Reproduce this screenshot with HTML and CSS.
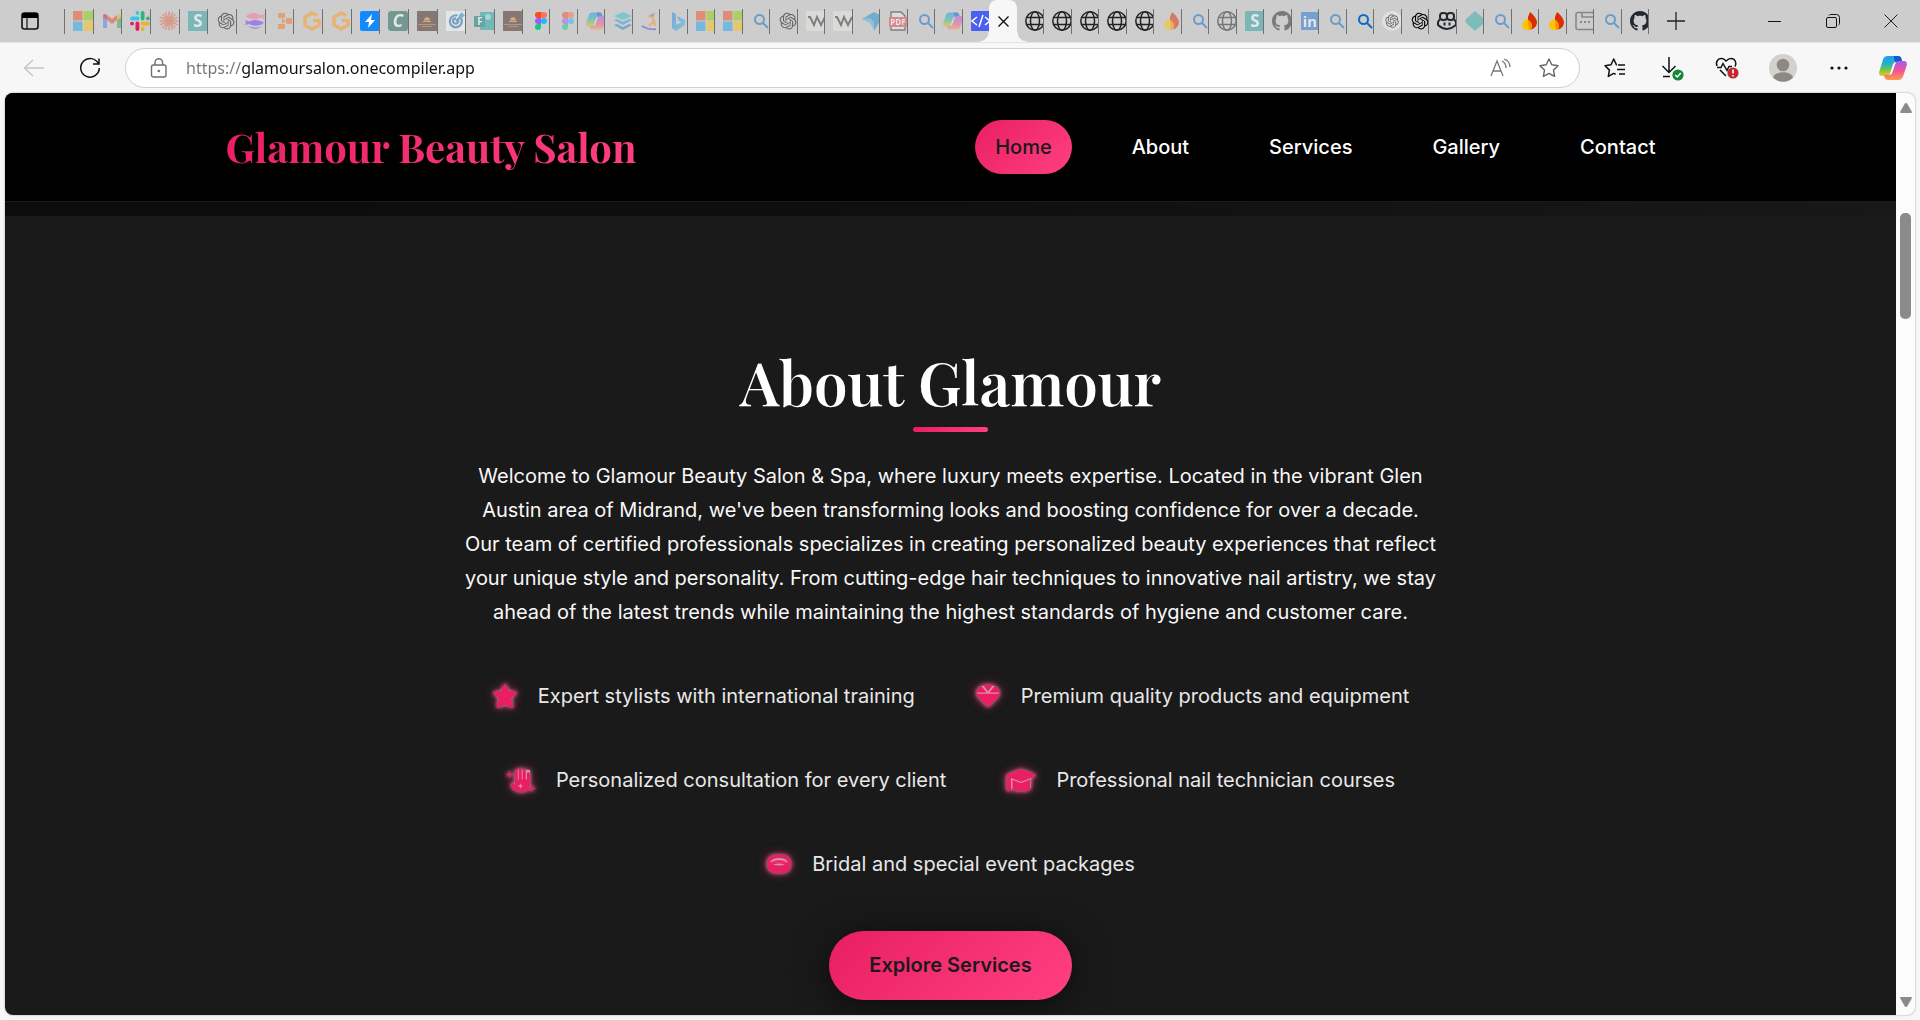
FILE: index.html
```html
<!DOCTYPE html>
<html lang="en">
<head>
<meta charset="utf-8">
<meta name="viewport" content="width=device-width, initial-scale=1">
<title>Glamour Beauty Salon</title>
<link rel="stylesheet" href="styles.css">
</head>
<body>
<svg class="gradients" aria-hidden="true">
  <defs>
    <linearGradient id="cpA" x1="0" y1="0" x2="0" y2="1"><stop offset="0" stop-color="#1b9df0"/><stop offset=".4" stop-color="#22b3c8"/><stop offset=".7" stop-color="#7cc44a"/><stop offset="1" stop-color="#f5c518"/></linearGradient>
    <linearGradient id="cpB" x1="0" y1="0" x2="0" y2="1"><stop offset="0" stop-color="#a45cf0"/><stop offset=".5" stop-color="#f0529a"/><stop offset="1" stop-color="#ff9a4a"/></linearGradient>
    <linearGradient id="bg" x1="0" y1="0" x2="1" y2="1"><stop offset="0" stop-color="#2f7bea"/><stop offset="1" stop-color="#2fc4ea"/></linearGradient>
  </defs>
</svg>
<svg class="sprite" aria-hidden="true">
  <symbol id="ms" viewBox="0 0 20 20"><path fill="#f25022" d="M0 0h9.500v9.500H0z"/><path fill="#8fce00" d="M10.500 0H20v9.500h-9.500z"/><path fill="#22a6f0" d="M0 10.500h9.500V20H0z"/><path fill="#ffc40a" d="M10.500 10.500H20V20h-9.500z"/></symbol>
  <symbol id="gmail" viewBox="0 0 20 20"><path fill="#4285f4" d="M1 5l4 3v9H2a1 1 0 0 1-1-1z"/><path fill="#34a853" d="M15 8l4-3v11a1 1 0 0 1-1 1h-3z"/><path fill="#ea4335" d="M5 4l5 4 5-4v5l-5 4-5-4z"/><path fill="#c5221f" d="M1 5c0-2 2-3 4-1v5L1 6z"/><path fill="#fbbc04" d="M19 5c0-2-2-3-4-1v5l4-3z"/></symbol>
  <symbol id="slack" viewBox="0 0 20 20"><g stroke-width="3.800" stroke-linecap="round"><path stroke="#36c5f0" d="M2 7.400h5.500M7.400 2v.1"/><path stroke="#2eb67d" d="M12.600 2v5.500M18 7.400h-.1"/><path stroke="#ecb22e" d="M18 12.600h-5.500M12.600 18v-.1"/><path stroke="#e01e5a" d="M7.400 18v-5.500M2 12.600h.1"/></g></symbol>
  <symbol id="burst" viewBox="0 0 20 20"><path stroke="#e5694a" stroke-width="1.500" stroke-linecap="round" d="M10 1v18M1 10h18M4 3.500l12 13M16 3.500l-12 13M6.500 1.800l7 16.400M13.500 1.800l-7 16.400M1.800 6.500l16.400 7M1.800 13.500l16.400-7"/></symbol>
  <symbol id="sq-s" viewBox="0 0 20 20"><path fill="#27a5a1" d="M0 0h20v20H0z"/><text x="10" y="16" font-size="17" font-weight="700" text-anchor="middle" fill="#fff">S</text></symbol>
  <symbol id="ai" viewBox="0 0 24 24"><path d="M22.282 9.821a5.985 5.985 0 0 0-.516-4.910 6.046 6.046 0 0 0-6.510-2.900A6.065 6.065 0 0 0 4.981 4.182a5.985 5.985 0 0 0-3.998 2.900 6.046 6.046 0 0 0 .743 7.097 5.980 5.980 0 0 0 .511 4.911 6.051 6.051 0 0 0 6.515 2.900A5.985 5.985 0 0 0 13.260 24a6.056 6.056 0 0 0 5.772-4.206 5.989 5.989 0 0 0 3.998-2.900 6.056 6.056 0 0 0-.748-7.073zm-9.022 12.608a4.476 4.476 0 0 1-2.876-1.041l.142-.080 4.778-2.758a.795.795 0 0 0 .393-.681v-6.737l2.020 1.169a.071.071 0 0 1 .038.052v5.583a4.504 4.504 0 0 1-4.495 4.494zm-9.661-4.125a4.471 4.471 0 0 1-.535-3.014l.142.085 4.783 2.758a.771.771 0 0 0 .781 0l5.843-3.369v2.332a.080.080 0 0 1-.033.062L9.740 19.950a4.499 4.499 0 0 1-6.141-1.646zM2.341 7.896a4.485 4.485 0 0 1 2.366-1.973V11.600a.766.766 0 0 0 .388.677l5.814 3.354-2.020 1.169a.076.076 0 0 1-.071 0l-4.830-2.787A4.504 4.504 0 0 1 2.341 7.872zm16.596 3.856L13.104 8.364 15.119 7.200a.076.076 0 0 1 .071 0l4.830 2.791a4.494 4.494 0 0 1-.677 8.104v-5.677a.790.790 0 0 0-.407-.667zm2.011-3.023l-.142-.085-4.774-2.782a.776.776 0 0 0-.785 0L9.409 9.230V6.897a.066.066 0 0 1 .028-.062l4.830-2.787a4.499 4.499 0 0 1 6.680 4.660zM8.307 12.863l-2.020-1.164a.080.080 0 0 1-.038-.057V6.074a4.499 4.499 0 0 1 7.376-3.454l-.142.081L8.704 5.459a.795.795 0 0 0-.393.681zm1.098-2.365l2.602-1.500 2.607 1.500v2.999l-2.597 1.500-2.607-1.500Z" transform="translate(2 2) scale(.84)"/></symbol>
  <symbol id="ai-disc" viewBox="0 0 20 20"><circle cx="10" cy="10" r="10" fill="#f4f4f4"/><use href="#ai" x="2" y="2" width="16" height="16"/></symbol>
  <symbol id="fishes" viewBox="0 0 20 20"><path fill="#ff6fa0" d="M1 5.500c3-4 10-5 15-1l4-2-1 3 1 3-4-2c-4 2.500-11 2.500-15-1z"/><path fill="#6a3cff" d="M0 9l4 1.500c4-2.500 10-2 15 1-4 4-11 4-15 1.500L0 14l1-2.500z"/><path fill="#4a3bff" d="M3 15c5 2 10 2 14 0-3 3-10 4-14 0z"/></symbol>
  <symbol id="blocks" viewBox="0 0 20 20"><path fill="#f4782c" d="M4 2h7v5H4zM12 7h6v6h-6zM4 13h7v5H4zM8 7l4 3-4 3z"/></symbol>
  <symbol id="gee" viewBox="0 0 20 20"><path fill="none" stroke="#ff9a1f" stroke-width="3.600" stroke-linejoin="round" d="M15 4.500l-5-2.500-7 4v8l7 4 7-4v-4.500h-6"/></symbol>
  <symbol id="bolt" viewBox="0 0 20 20"><rect width="20" height="20" rx="2" fill="#1389fd"/><path fill="#fff" d="M12 3l-7 8h4l-1 6 7-8h-4z"/></symbol>
  <symbol id="cee" viewBox="0 0 20 20"><rect width="20" height="20" rx="3" fill="#1c6558"/><text x="10" y="16" font-size="17" font-weight="700" font-style="italic" text-anchor="middle" fill="#fff">C</text></symbol>
  <symbol id="crown" viewBox="0 0 20 20"><path fill="#40231c" d="M0 0h20v20H0z"/><path fill="#e08a3a" d="M7 9.500l.8-2.500L10 6l2.200 1 .8 2.500zM6 10h8v1H6z"/><path fill="#a8602c" d="M1 13h18v1H1zM5 15h10v1H5z"/></symbol>
  <symbol id="target" viewBox="0 0 20 20"><path fill="#fff" d="M0 0h20v20H0z"/><g fill="none" stroke="#1f78b8" stroke-width="2.200"><path d="M14.500 6.500a6 6 0 1 1-3-2M12 9a2.600 2.600 0 1 1-2-1.500M10 10l6-6"/></g><path fill="#1f9ad8" d="M13 4l3-3 1 2 2 1-3 3h-3z"/></symbol>
  <symbol id="forms" viewBox="0 0 20 20"><path fill="#1ba5a0" d="M6 1h14v18H6z"/><circle cx="14" cy="6" r="3" fill="#7fe0dc"/><path fill="#067a78" d="M0 5h11v11H0z"/><text x="6" y="14" font-size="10" font-weight="700" text-anchor="middle" fill="#fff">F</text></symbol>
  <symbol id="figma" viewBox="0 0 20 20"><path fill="#f24e1e" d="M10 1H7a3 3 0 0 0 0 6h3z"/><path fill="#ff7262" d="M10 1h3a3 3 0 0 1 0 6h-3z"/><path fill="#a259ff" d="M10 7H7a3 3 0 0 0 0 6h3z"/><circle cx="13" cy="10" r="3" fill="#1abcfe"/><path fill="#0acf83" d="M10 13H7a3 3 0 1 0 3 3z"/></symbol>
  <symbol id="copilot" viewBox="0 0 28 26"><path fill="url(#cpA)" d="M9 1h10c2 0 3 1 3.500 3l.8 3h-6c-2 0-3 1-3.600 3l-2.500 8c-.6 2-1.700 3-3.500 3H3C.5 21-.3 19 .3 16.500L4 4.500C4.800 2 6.500 1 9 1z"/><path fill="#1559c9" d="M15 1h4c2 0 3 1 3.500 3l.8 3h-6c-1.300 0-1.700-1-2-2z"/><path fill="url(#cpB)" d="M19 25H9c-2 0-3-1-3.500-3l-.5-2h5c2 0 3-1 3.600-3l2.600-8c.6-2 1.700-3 3.500-3H25c2.500 0 3.300 2 2.700 4.500l-3.700 11c-.8 2.500-2.500 3.500-5 3.500z"/><path fill="#f7f7f7" d="M17 8.500q-1.500.5-2 2l-2.500 7q-.5 1.500-2 1.500 1-.5 1.500-2l2.500-7q.7-1.700 2.500-1.500z"/></symbol>
  <symbol id="stack" viewBox="0 0 20 20"><path fill="#2fc2cc" d="M10 1l9 4-9 4-9-4z"/><path fill="#22a5d8" d="M1 9l3-1 6 3 6-3 3 1-9 5z"/><path fill="#1a86d0" d="M1 14l3-1 6 3 6-3 3 1-9 5z"/></symbol>
  <symbol id="sail" viewBox="0 0 20 20"><path fill="none" stroke="#ff8c2a" stroke-width="2" d="M14 2l-3 4 2 4-5 5M12 6l-5-1M13 9l1 6"/><path fill="none" stroke="#6a4cdc" stroke-width="2" d="M1 15q6 4 14 3"/><circle cx="11" cy="4" r="1.500" fill="#5a6cff"/></symbol>
  <symbol id="bing" viewBox="0 0 20 20"><path fill="url(#bg)" d="M4 1l4 2v11l6-3-3-1-2-5 8 4v5l-9 6-4-3z"/></symbol>
  <symbol id="search" viewBox="0 0 20 20"><g fill="none" stroke="#0b6cc4" stroke-width="2"><circle cx="8.500" cy="8.500" r="4.500"/><path d="M12 12l5 5"/></g></symbol>
  <symbol id="dub" viewBox="0 0 20 20"><path fill="#ece8e0" d="M0 0h20v20H0z"/><path fill="none" stroke="#333" stroke-width="2" d="M2 6h2l4 8 3-8 4 8 4-8"/></symbol>
  <symbol id="bird" viewBox="0 0 20 20"><path fill="#1a8fd0" d="M1 8l12-7 6 3v6l-6 10V11z"/><path fill="#56b4e8" d="M1 8l8-1 4 4v8l-4-7z"/></symbol>
  <symbol id="pdf" viewBox="0 0 20 20"><path fill="#eee" stroke="#333" stroke-width="1.400" d="M3 1h10l4 4v14H3z"/><path fill="#e5454f" d="M1 6h18v10H1z"/><text x="10" y="14" font-size="8" font-weight="700" text-anchor="middle" fill="#fff">PDF</text></symbol>
  <symbol id="code" viewBox="0 0 20 20"><rect width="20" height="20" rx="1" fill="#4b5ff0"/><path fill="none" stroke="#fff" stroke-width="1.500" d="M6 6l-5 4 5 4M14 6l5 4-5 4M12 4L8 16"/></symbol>
  <symbol id="globe" viewBox="0 0 20 20"><g fill="none" stroke="#222" stroke-width="1.500"><circle cx="10" cy="10" r="9.200"/><ellipse cx="10" cy="10" rx="4.500" ry="9.200"/><path d="M2 6.500h16M2 13.500h16"/></g></symbol>
  <symbol id="flame" viewBox="0 0 20 20"><path fill="#dd2c00" d="M10 1c5 4 7 8 7 11a7 7 0 0 1-9 6V6z"/><path fill="#ffc400" d="M7 8c3 2 5 4 5 7 0 2-1 4-4 4-4 0-6-2-6-5 0-2 2-5 5-6z"/><path fill="#ff9100" d="M8 9c3 2 4 4 4 6s-1 4-3 4z"/></symbol>
  <symbol id="github" viewBox="0 0 16 16"><path fill="#24292f" d="M8 0C3.580 0 0 3.580 0 8c0 3.540 2.290 6.530 5.470 7.590.4.070.550-.170.550-.380 0-.190-.010-.820-.010-1.490-2.010.370-2.530-.490-2.690-.940-.090-.230-.480-.940-.820-1.130-.280-.150-.680-.520-.010-.530.630-.010 1.080.580 1.230.820.720 1.210 1.870.870 2.330.660.070-.520.280-.870.510-1.070-1.780-.2-3.640-.890-3.640-3.950 0-.870.310-1.590.820-2.150-.080-.2-.360-1.020.080-2.120 0 0 .670-.210 2.200.820.640-.180 1.320-.270 2-.270s1.360.090 2 .270c1.530-1.040 2.200-.820 2.200-.820.440 1.100.160 1.920.080 2.120.510.560.820 1.270.820 2.150 0 3.070-1.870 3.750-3.650 3.950.290.250.540.730.540 1.480 0 1.070-.010 1.930-.010 2.200 0 .210.150.460.550.380A8.010 8.010 0 0 0 16 8c0-4.420-3.580-8-8-8z"/></symbol>
  <symbol id="linkedin" viewBox="0 0 20 20"><rect x="1" y="1" width="18" height="18" rx="1" fill="#2374d8"/><text x="10" y="16" font-size="15" font-weight="700" text-anchor="middle" fill="#fff">in</text></symbol>
  <symbol id="ghc" viewBox="0 0 20 20"><g fill="none" stroke="#24292f" stroke-width="2"><rect x="3" y="2" width="7" height="7" rx="3"/><rect x="10" y="2" width="7" height="7" rx="3"/><path d="M3 8l-2 3v3q9 8 18 0v-3l-2-3"/><path d="M7.500 11.500v3M12.500 11.500v3"/></g></symbol>
  <symbol id="rhomb" viewBox="0 0 20 20"><path fill="#2fada6" d="M10 0l9 8q1 2 0 4l-9 8-9-8q-1-2 0-4z"/></symbol>
  <symbol id="panel" viewBox="0 0 20 20"><g fill="none" stroke="#444" stroke-width="1.600"><rect x="1" y="1.500" width="18" height="17" rx="2"/><path d="M7 2v4h12"/></g><path fill="#444" d="M5 10h2v2H5zM9 10h2v2H9zM13 10h2v2h-2z"/></symbol>
</svg>

<header class="browser">
  <div class="tabstrip">
    <button class="tab-menu" aria-label="Tab actions"><svg width="18" height="18" viewBox="0 0 18 18"><rect x="1" y="1" width="16" height="16" rx="2.500" fill="none" stroke="#111" stroke-width="1.600"/><path d="M1 3a2 2 0 0 1 2-2h12a2 2 0 0 1 2 2v3H1z"/><path d="M6 6v11" stroke="#111" stroke-width="1.200"/></svg></button>
    <nav class="tabs tabs-first" aria-label="Tabs">
      <button class="tab idle"><svg><use href="#ms"/></svg></button>
      <button class="tab idle"><svg><use href="#gmail"/></svg></button>
      <button class="tab"><svg><use href="#slack"/></svg></button>
      <button class="tab idle"><svg><use href="#burst"/></svg></button>
      <button class="tab idle"><svg><use href="#sq-s"/></svg></button>
      <button class="tab idle"><svg><use href="#ai"/></svg></button>
      <button class="tab idle"><svg><use href="#fishes"/></svg></button>
      <button class="tab idle"><svg><use href="#blocks"/></svg></button>
      <button class="tab idle"><svg><use href="#gee"/></svg></button>
      <button class="tab idle"><svg><use href="#gee"/></svg></button>
      <button class="tab"><svg><use href="#bolt"/></svg></button>
      <button class="tab idle"><svg><use href="#cee"/></svg></button>
      <button class="tab idle"><svg><use href="#crown"/></svg></button>
      <button class="tab idle"><svg><use href="#target"/></svg></button>
      <button class="tab idle"><svg><use href="#forms"/></svg></button>
    </nav>
    <nav class="tabs tabs-second" aria-label="More tabs">
      <button class="tab idle"><svg><use href="#crown"/></svg></button>
      <button class="tab"><svg><use href="#figma"/></svg></button>
      <button class="tab idle"><svg><use href="#figma"/></svg></button>
      <button class="tab idle"><svg><use href="#copilot"/></svg></button>
      <button class="tab idle"><svg><use href="#stack"/></svg></button>
      <button class="tab idle"><svg><use href="#sail"/></svg></button>
      <button class="tab idle"><svg><use href="#bing"/></svg></button>
      <button class="tab idle"><svg><use href="#ms"/></svg></button>
      <button class="tab idle"><svg><use href="#ms"/></svg></button>
      <button class="tab idle"><svg><use href="#search"/></svg></button>
      <button class="tab idle"><svg><use href="#ai"/></svg></button>
      <button class="tab idle"><svg><use href="#dub"/></svg></button>
      <button class="tab idle"><svg><use href="#dub"/></svg></button>
      <button class="tab idle"><svg><use href="#bird"/></svg></button>
      <button class="tab idle"><svg><use href="#pdf"/></svg></button>
      <button class="tab idle"><svg><use href="#search"/></svg></button>
      <button class="tab idle"><svg><use href="#copilot"/></svg></button>
      <button class="tab bare"><svg><use href="#code"/></svg></button>
    </nav>
    <button class="tab-active" aria-label="Close tab"><svg width="11" height="11" viewBox="0 0 11 11"><path d="M.5.5l10 10M10.500.5l-10 10" stroke="#111" stroke-width="1.400"/></svg></button>
    <nav class="tabs tabs-third" aria-label="Other tabs">
      <button class="tab"><svg><use href="#globe"/></svg></button>
      <button class="tab"><svg><use href="#globe"/></svg></button>
      <button class="tab"><svg><use href="#globe"/></svg></button>
      <button class="tab"><svg><use href="#globe"/></svg></button>
      <button class="tab"><svg><use href="#globe"/></svg></button>
      <button class="tab idle"><svg><use href="#flame"/></svg></button>
      <button class="tab idle"><svg><use href="#search"/></svg></button>
      <button class="tab idle"><svg><use href="#globe"/></svg></button>
      <button class="tab idle"><svg><use href="#sq-s"/></svg></button>
      <button class="tab idle"><svg><use href="#github"/></svg></button>
      <button class="tab idle"><svg><use href="#linkedin"/></svg></button>
      <button class="tab idle"><svg><use href="#search"/></svg></button>
      <button class="tab"><svg><use href="#search"/></svg></button>
      <button class="tab idle"><svg><use href="#ai-disc"/></svg></button>
      <button class="tab"><svg><use href="#ai"/></svg></button>
      <button class="tab"><svg><use href="#ghc"/></svg></button>
      <button class="tab idle"><svg><use href="#rhomb"/></svg></button>
      <button class="tab idle"><svg><use href="#search"/></svg></button>
      <button class="tab"><svg><use href="#flame"/></svg></button>
      <button class="tab"><svg><use href="#flame"/></svg></button>
      <button class="tab idle"><svg><use href="#panel"/></svg></button>
      <button class="tab idle"><svg><use href="#search"/></svg></button>
      <button class="tab"><svg><use href="#github"/></svg></button>
    </nav>
    <button class="new-tab" aria-label="New tab"><svg width="18" height="18" viewBox="0 0 18 18"><path d="M9 0v18M0 9h18" stroke="#222" stroke-width="1.300"/></svg></button>
    <div class="window-controls">
      <button aria-label="Minimize"><svg width="14" height="14" viewBox="0 0 14 14"><path d="M0 7.500h13" stroke="#111"/></svg></button>
      <button aria-label="Restore"><svg width="14" height="14" viewBox="0 0 14 14"><g fill="none" stroke="#111"><rect x=".5" y="3.500" width="10" height="10" rx="1.500"/><path d="M3 1.500q.5-1 1.500-1h6q3 0 3 3v6q0 1-1 1.500"/></g></svg></button>
      <button aria-label="Close"><svg width="14" height="14" viewBox="0 0 14 14"><path d="M.5.5l13 13M13.500.5l-13 13" stroke="#222"/></svg></button>
    </div>
  </div>

  <div class="toolbar">
    <button class="tool" aria-label="Back"><svg width="22" height="20" viewBox="0 0 22 20"><path d="M21 10H2M10 2l-8.500 8 8.500 8" fill="none" stroke="#c6c6c6" stroke-width="1.400"/></svg></button>
    <button class="tool" aria-label="Refresh"><svg width="22" height="22" viewBox="0 0 22 22"><path d="M19.500 7A9.300 9.300 0 1 0 20.300 11M20 1.500V7h-6" fill="none" stroke="#111" stroke-width="1.500"/></svg></button>
    <div class="address">
      <svg width="18" height="20" viewBox="0 0 18 20"><g fill="none" stroke="#707070" stroke-width="1.400"><rect x="1.500" y="7" width="14.500" height="12" rx="2"/><path d="M5 7V4.500a3.800 3.800 0 0 1 7.600 0V7"/></g><circle cx="8.800" cy="13" r="1.300" fill="#707070"/></svg>
      <input class="url" type="text" aria-label="Address" value="https://glamoursalon.onecompiler.app">
      <button class="tool" aria-label="Read aloud"><svg width="22" height="20" viewBox="0 0 22 20"><path d="M1 18L7 3l6 15M3 13h8M12 3q4 2 4 7M14 1q6 2 6 8" fill="none" stroke="#777" stroke-width="1.300"/></svg></button>
      <button class="tool" aria-label="Favorite"><svg width="22" height="22" viewBox="0 0 22 22"><path d="M11 2l2.800 5.800 6.300.9-4.600 4.400 1.100 6.300-5.600-3-5.600 3 1.100-6.300L1.900 8.700l6.300-.9z" fill="none" stroke="#666" stroke-width="1.400" stroke-linejoin="round"/></svg></button>
    </div>
    <button class="tool" aria-label="Favorites"><svg width="22" height="22" viewBox="0 0 22 22"><path d="M13 7.800h-.5L9.700 2 7 7.800l-6 .9 4.400 4.400-1.100 6.300 5.400-3 2 .8M14 8h7M13 12.500h8M15 17h6" fill="none" stroke="#111" stroke-width="1.500" stroke-linejoin="round"/></svg></button>
    <button class="tool" aria-label="Downloads"><svg width="28" height="26" viewBox="0 0 28 26"><path d="M12 2v15M5.500 11l6.500 6.500 6.500-6.500M6 21.500h7" fill="none" stroke="#111" stroke-width="1.500"/><circle cx="21" cy="20" r="5.600" fill="#16863a"/><path d="M18.300 20l2 2 3.500-4" fill="none" stroke="#fff" stroke-width="1.500"/></svg></button>
    <button class="tool" aria-label="Browser essentials"><svg width="28" height="26" viewBox="0 0 28 26"><path d="M4 11C2 6 6 3 9 3.500c2 .3 3 1.500 4 2.500 1-1 3-2.500 5-2.500 4 0 6 4 4 8M4 12.500h4l2-4 4 7 2-4h3M7 15l6 6" fill="none" stroke="#111" stroke-width="1.500"/><circle cx="20" cy="18" r="5.600" fill="#c4262e"/><path d="M20 14.500v4M20 20v1.500" stroke="#fff" stroke-width="1.600"/></svg></button>
    <button class="tool" aria-label="Profile"><svg width="28" height="28" viewBox="0 0 28 28"><circle cx="14" cy="14" r="14" fill="#d4d1cd"/><circle cx="14" cy="11" r="6.300" fill="#8c8884"/><path d="M4 23.500c2-7 18-7 20 0a14 14 0 0 1-20 0z" fill="#8c8884"/></svg></button>
    <button class="tool" aria-label="Settings and more"><svg width="18" height="4" viewBox="0 0 18 4"><g fill="#111"><circle cx="2" cy="2" r="1.600"/><circle cx="9" cy="2" r="1.600"/><circle cx="16" cy="2" r="1.600"/></g></svg></button>
    <button class="tool tool-copilot" aria-label="Copilot"><svg width="28" height="26"><use href="#copilot"/></svg></button>
  </div>
</header>

<div class="viewport">
  <div class="site">
    <header class="site-header">
      <div class="container">
        <a class="logo" href="#home">Glamour Beauty Salon</a>
        <nav class="menu" aria-label="Main">
          <a class="current" href="#home">Home</a>
          <a href="#about">About</a>
          <a href="#services">Services</a>
          <a href="#gallery">Gallery</a>
          <a href="#contact">Contact</a>
        </nav>
      </div>
    </header>
    <div class="hero-edge"></div>
    <main class="about" id="about">
      <h1>About Glamour</h1>
      <p class="intro">Welcome to Glamour Beauty Salon &amp; Spa, where luxury meets expertise. Located in the vibrant Glen Austin area of Midrand, we've been transforming looks and boosting confidence for over a decade. Our team of certified professionals specializes in creating personalized beauty experiences that reflect your unique style and personality. From cutting-edge hair techniques to innovative nail artistry, we stay ahead of the latest trends while maintaining the highest standards of hygiene and customer care.</p>
      <ul class="features">
        <li><svg class="glyph" viewBox="0 0 26 26"><path stroke="#e91e63" stroke-width="1.500" stroke-linejoin="round" d="M13 1.500l3.400 7.300 8 .8-6 5.300 2.300 9.300L13 21l-7.700 3.200 2.300-9.300-6-5.300 8-.8z"/></svg>Expert stylists with international training</li>
        <li><svg class="glyph" viewBox="0 0 26 26"><path class="seam" d="M6 3h14l4 7-11 12L2 10z"/><path d="M6.500 3l5 6.500H1q1.500-4.500 5.500-6.500zM8 2h10l-5 6.500zM19.500 3q4 2 5.500 6.500H14.500zM1 10.700h24q0 1-1 2L14 23.500q-1 1-2 0L2 12.700q-1-1-1-2z"/></svg>Premium quality products and equipment</li>
        <li><svg class="glyph wide" viewBox="0 0 30 26"><path class="seam" d="M10 3h14v14H10z"/><path d="M9 3.500q1.300-1.500 2.800 0V12.500h.9V2q1.500-2 3 0v10.500h1V3q1.500-1.500 3 0v9.500h1.200V6q1.500-1.500 3 0v11c0 5-3 8-8 8-6 0-11-3-11.500-8.500q1.500-1 4.600 1.200zM3.500 3.500l1 3 3 1-3 1-1 3-1-3-3-1 3-1zM26 17.500l1 3 3 1-3 1-1 3-1-3-4-1 4-1z"/><path class="spark" d="M14.500 16l.8 2.200 2.200.8-2.200.8-.8 2.200-.8-2.200-2.200-.8 2.200-.8z"/></svg>Personalized consultation for every client</li>
        <li><svg class="glyph wide" viewBox="0 0 30 26"><path class="seam" d="M4 9h21v12H4z"/><path d="M14 2.500q1-.4 2 0l13.500 5q1 .8 0 1.700L16 14.500q-1 .4-2 0L5 11v12.500q-2 1-4.500 0V8.500q0-.7.8-1zM6.500 12.800l7.500 3q1 .4 2 0l8.500-3.500V20c0 2.500-2 4-4 4h-10c-2.500 0-4-1.500-4-4z"/></svg>Professional nail technician courses</li>
        <li><svg class="glyph" viewBox="0 0 26 26"><path class="seam" d="M3 7h20v9H3z"/><path fill-rule="evenodd" d="M9 4h8c5 0 8 4 8 9s-3 9-9 9h-6c-6 0-9-4-9-9s3-9 8-9zM4 11.500h18C21 8.500 18 7 13 7s-8 1.500-9 4.500zM7 13.500q6 2 12 0-6-2-12 0z"/><path d="M4.500 11.500q8.500-4.500 17 0z"/></svg>Bridal and special event packages</li>
      </ul>
      <button class="cta">Explore Services</button>
    </main>
  </div>
  <div class="scroll" aria-hidden="true">
    <svg width="12" height="10" viewBox="0 0 12 10"><path d="M6 0q.8 0 1.300.8L12 9q0 1-1 1H1Q0 10 0 9L4.700.8Q5.200 0 6 0z"/></svg>
    <span class="thumb"></span>
    <svg width="12" height="10" viewBox="0 0 12 10"><path d="M6 10q.8 0 1.300-.8L12 1q0-1-1-1H1Q0 0 0 1l4.700 8.200Q5.200 10 6 10z"/></svg>
  </div>
</div>
</body>
</html>
```
FILE: styles.css
```css
*, *::before, *::after { box-sizing: border-box; }

body {
  margin: 0;
  min-height: 100vh;
  display: flex;
  flex-direction: column;
  background: #f7f7f7;
  font-family: Inter, "Liberation Sans", sans-serif;
}

button {
  margin: 0;
  padding: 0;
  border: 0;
  background: none;
  font: inherit;
}

.gradients { position: absolute; width: 0; height: 0; }
.sprite { display: none; }
.sprite text { font-family: "Open Sans", sans-serif; }

/* Tab strip */
.tabstrip {
  display: flex;
  height: 42px;
  background: #cdcdcd;
}
.tab-menu {
  flex: none;
  width: 64px;
  padding-right: 4px;
  display: grid;
  place-items: center;
}
.tabs { display: flex; padding-top: 9px; min-width: 0; }
.tabs-first { flex: 0 1 431px; }
.tabs-second { flex: 0 1 494px; }
.tabs-third { flex: 0 1 632px; }
.tab {
  flex: 1;
  min-width: 0;
  height: 25px;
  padding: 2px 0 0 8px;
  display: flex;
  overflow: hidden;
  border-right: 1px solid #707070;
}
.tabs-first .tab:first-child { border-left: 1px solid #707070; }
.tab.bare { border-right: 0; }
.tab svg { flex: none; width: 20px; height: 20px; }
.tab.idle svg { opacity: .5; }
.tab-active {
  position: relative;
  flex: none;
  width: 28px;
  display: grid;
  place-items: center;
  background: #f7f7f7;
  border-radius: 8px 8px 0 0;
}
.tab-active::before,
.tab-active::after {
  content: "";
  position: absolute;
  bottom: 0;
  width: 10px;
  height: 10px;
}
.tab-active::before { right: 100%; background: radial-gradient(circle at 0 0, transparent 9px, #f7f7f7 10px); }
.tab-active::after { left: 100%; background: radial-gradient(circle at 100% 0, transparent 9px, #f7f7f7 10px); }
.new-tab { flex: none; width: 54px; display: grid; place-items: center; }
.window-controls { display: flex; margin-left: auto; }
.window-controls button { width: 58px; display: grid; place-items: center; }

/* Toolbar */
.toolbar {
  display: flex;
  align-items: center;
  gap: 20px;
  height: 51px;
  padding: 0 11px 0 16px;
  border-top: 1px solid #e4e4e4;
}
.tool { flex: none; width: 36px; height: 36px; display: grid; place-items: center; }
.tool-copilot { width: 32px; }
.address {
  flex: 1;
  display: flex;
  align-items: center;
  gap: 12px;
  height: 40px;
  padding: 0 12px 0 24px;
  margin: 0 -3px;
  border: 1px solid #cfcfcf;
  border-radius: 20px;
  background: #fff;
}
.url {
  flex: 1;
  min-width: 0;
  padding: 0 6px;
  border: 0;
  font: 16px/24px "Noto Sans", "Open Sans", sans-serif;
  color: transparent;
  background: linear-gradient(90deg, #767676 62px, #111 62px);
  -webkit-background-clip: text;
  background-clip: text;
}

/* Page area */
.viewport {
  flex: 1;
  display: flex;
  margin: 0 5px 5px;
  border-radius: 8px;
  overflow: hidden;
  background: #fcfcfc;
  box-shadow: 0 0 2px #0006;
}
.site { flex: 1; background: #1a1a1a; }
.scroll {
  display: flex;
  flex-direction: column;
  align-items: center;
  width: 19px;
  padding: 10px 0 8px;
  fill: #8b8b8b;
}
.thumb { width: 11px; height: 106px; margin: 100px 0 auto; border-radius: 5px; background: #8b8b8b; }

.site-header {
  background: #000;
  border-bottom: 1px solid #1a1a1a;
}
.container {
  display: flex;
  align-items: center;
  justify-content: space-between;
  max-width: 1500px;
  min-height: 108px;
  margin: 0 auto;
  padding: 0 25px;
}
.logo {
  font: 700 40px/54px "Playfair Display", "Liberation Serif", serif;
  text-decoration: none;
  color: transparent;
  background: linear-gradient(135deg, #e91e63, #ff4081);
  -webkit-background-clip: text;
  background-clip: text;
}
.menu { display: flex; gap: 40px; }
.menu a {
  padding: 10px 20px;
  border-radius: 31px;
  font-size: 20px;
  line-height: 34px;
  font-weight: 500;
  color: #fff;
  text-decoration: none;
}
.menu a.current {
  color: #1a1a1a;
  background: linear-gradient(135deg, #e91e63, #ff4081);
}
.hero-edge { height: 14px; background: linear-gradient(90deg, #0c0c0c, #0f0f0f 50%, #181818); }

.about {
  display: flex;
  flex-direction: column;
  align-items: center;
  padding: 125px 24px 15px;
  color: #fff;
}
h1 {
  display: flex;
  flex-direction: column;
  align-items: center;
  gap: 6px;
  margin: 0 0 27px;
  font: 600 60px/80px "Playfair Display", "Liberation Serif", serif;
}
h1::after {
  content: "";
  width: 75px;
  height: 5px;
  border-radius: 3px;
  background: linear-gradient(135deg, #e91e63, #ff4081);
}
.intro {
  max-width: 974px;
  margin: 0 0 50px;
  font-size: 20px;
  line-height: 34px;
  text-align: center;
  color: #f8f8f8;
}
.features {
  display: flex;
  flex-wrap: wrap;
  justify-content: center;
  gap: 50px 60px;
  max-width: 1000px;
  margin: 0 0 50px;
  padding: 0;
  list-style: none;
  font-size: 20px;
  line-height: 34px;
  color: #e8e8e8;
}
.features li { display: flex; align-items: center; gap: 20px; }
.glyph {
  width: 26px;
  height: 26px;
  fill: #e91e63;
  overflow: visible;
  filter: drop-shadow(0 0 2px #ffc0d4c0) drop-shadow(0 0 5px #e91e63a0);
}
.glyph.wide { width: 30px; }
.seam, .spark { fill: #d890a8; }
.cta {
  padding: 17px 40px 18px;
  border-radius: 35px;
  font-size: 20px;
  line-height: 34px;
  font-weight: 600;
  color: #1a1a1a;
  background: linear-gradient(135deg, #e91e63, #ff4081);
  box-shadow: 0 5px 38px #0009;
}
```
